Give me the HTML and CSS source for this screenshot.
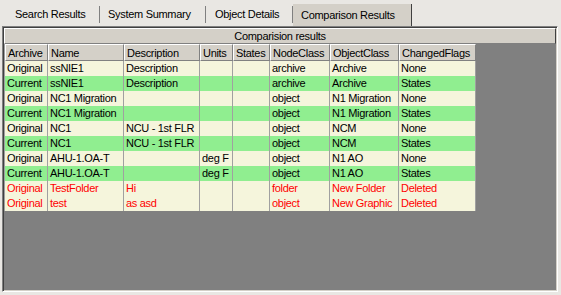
FILE: index.html
```html
<!DOCTYPE html>
<html>
<head>
    <meta charset="utf-8" />
    <title>Comparison Results</title>
    <link rel="stylesheet" href="styles.css">
</head>
<body>
    <div id="tabs">
        <div class="tab t1">Search Results</div>
        <div class="tab t2">System Summary</div>
        <div class="tab t3">Object Details</div>
        <div class="tab active">Comparison Results</div>
    </div>
    <div id="panel">
        <div id="caption">Comparision results</div>
        <table class="grid">
            <thead>
                <tr>
                    <th class="c1">Archive</th>
                    <th class="c2">Name</th>
                    <th class="c3">Description</th>
                    <th class="c4">Units</th>
                    <th class="c5">States</th>
                    <th class="c6">NodeClass</th>
                    <th class="c7">ObjectClass</th>
                    <th class="c8">ChangedFlags</th>
                </tr>
            </thead>
            <tbody>
                <tr class="orig"><td>Original</td><td>ssNIE1</td><td>Description</td><td></td><td></td><td>archive</td><td>Archive</td><td>None</td></tr>
                <tr class="cur"><td>Current</td><td>ssNIE1</td><td>Description</td><td></td><td></td><td>archive</td><td>Archive</td><td>States</td></tr>
                <tr class="orig"><td>Original</td><td>NC1 Migration</td><td></td><td></td><td></td><td>object</td><td>N1 Migration</td><td>None</td></tr>
                <tr class="cur"><td>Current</td><td>NC1 Migration</td><td></td><td></td><td></td><td>object</td><td>N1 Migration</td><td>States</td></tr>
                <tr class="orig"><td>Original</td><td>NC1</td><td>NCU - 1st FLR</td><td></td><td></td><td>object</td><td>NCM</td><td>None</td></tr>
                <tr class="cur"><td>Current</td><td>NC1</td><td>NCU - 1st FLR</td><td></td><td></td><td>object</td><td>NCM</td><td>States</td></tr>
                <tr class="orig"><td>Original</td><td>AHU-1.OA-T</td><td></td><td>deg F</td><td></td><td>object</td><td>N1 AO</td><td>None</td></tr>
                <tr class="cur"><td>Current</td><td>AHU-1.OA-T</td><td></td><td>deg F</td><td></td><td>object</td><td>N1 AO</td><td>States</td></tr>
                <tr class="orig del"><td>Original</td><td>TestFolder</td><td>Hi</td><td></td><td></td><td>folder</td><td>New Folder</td><td>Deleted</td></tr>
                <tr class="orig del"><td>Original</td><td>test</td><td>as asd</td><td></td><td></td><td>object</td><td>New Graphic</td><td>Deleted</td></tr>
            </tbody>
        </table>
    </div>
</body>
</html>
```

FILE: styles.css
```css
*{
    padding:0;
    margin:0;
}
body{
    background:#e9e7e3;
    font-family:"Liberation Sans", Arial, sans-serif;
    font-size:11px;
    letter-spacing:-0.3px;
    color:#000;
}
#tabs{
    height:26px;
    display:flex;
    align-items:flex-start;
}
.tab{
    box-sizing:border-box;
    margin-top:6px;
    height:17px;
    line-height:17px;
    border-right:1px solid #808080;
    color:#000;
    white-space:nowrap;
}
.t1{
    width:100px;
    padding-left:15px;
}
.t2{
    width:106px;
    padding-left:8px;
}
.t3{
    width:87px;
    padding-left:9px;
}
.tab.active{
    width:119px;
    margin-top:4px;
    height:22px;
    padding-top:2px;
    padding-left:8px;
    line-height:18px;
    background:#d4d0c8;
    border-right:1px solid #404040;
}
#panel{
    margin:0 3px 3px 2px;
    height:262px;
    background:#808080;
    border-top:1px solid #808080;
    border-left:1px solid #808080;
    border-right:1px solid #fff;
    border-bottom:1px solid #fff;
    box-shadow:inset 1px 1px 0 #404040, inset -1px -1px 0 #d4d0c8;
    padding:1px;
}
#caption{
    height:14px;
    line-height:14px;
    text-align:center;
    background:#d4d0c8;
    border-top:1px solid #fff;
    border-left:1px solid #fff;
    border-right:1px solid #404040;
    border-bottom:1px solid #808080;
}
.grid{
    table-layout:fixed;
    border-collapse:separate;
    border-spacing:0;
    border-left:1px solid #a0a0a0;
    width:471px;
}
.grid th{
    box-sizing:border-box;
    height:17px;
    padding:0 2px;
    background:#d4d0c8;
    font-weight:normal;
    text-align:left;
    border-top:1px solid #fff;
    border-left:1px solid #fff;
    border-right:1px solid #808080;
    border-bottom:1px solid #808080;
    white-space:nowrap;
    overflow:hidden;
}
.grid td{
    height:15px;
    line-height:15px;
    padding:0 0 0 2px;
    border-right:1px solid #a0a0a0;
    white-space:nowrap;
    overflow:hidden;
}
.c1{ width:43px; }
.c2{ width:76px; }
.c3{ width:76px; }
.c4{ width:33px; }
.c5{ width:37px; }
.c6{ width:60px; }
.c7{ width:69px; }
.c8{ width:77px; }
.orig{
    background:#f5f5dc;
}
.cur{
    background:#90ee90;
}
.del{
    color:#ff0000;
}
```
